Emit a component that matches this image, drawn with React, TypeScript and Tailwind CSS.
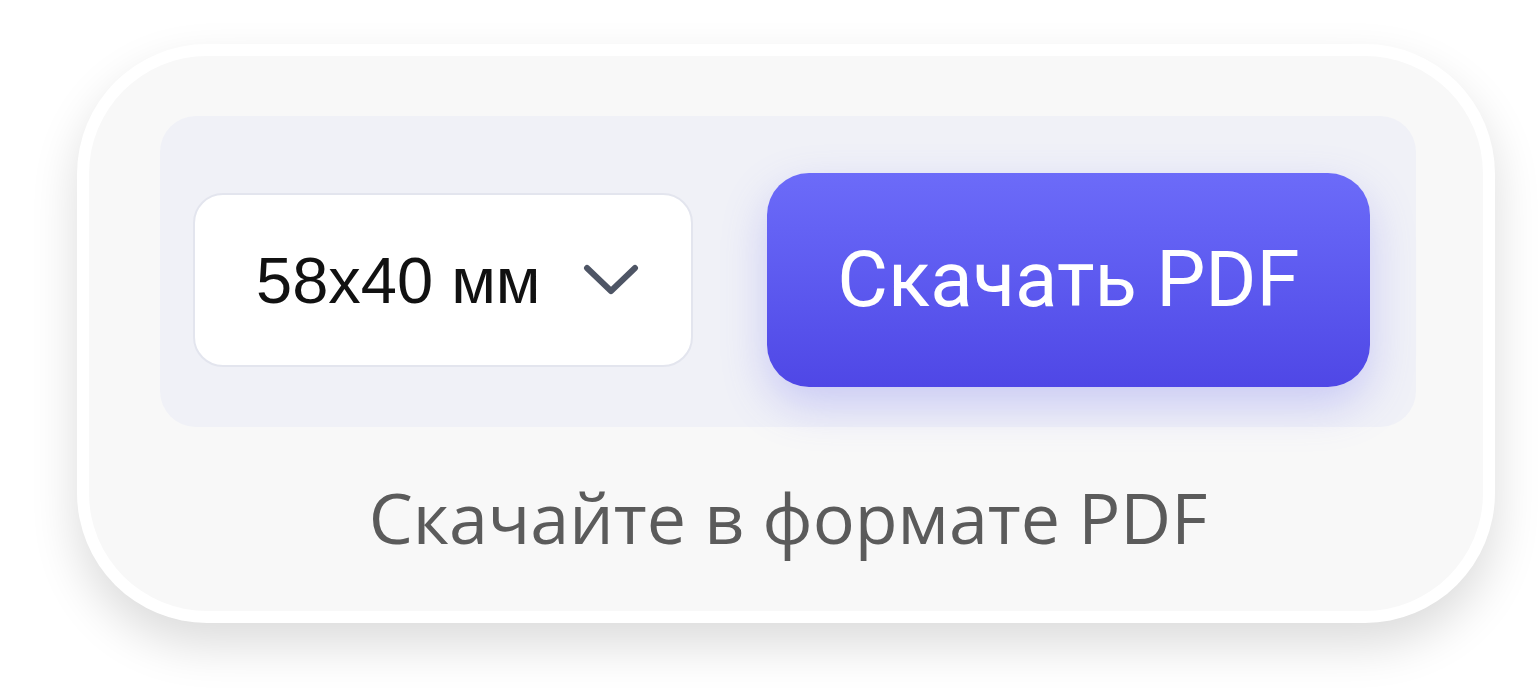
import React from 'react';

const Chevron = () => (
  <svg width="56" height="32" viewBox="0 0 56 32" fill="none" className="shrink-0">
    <path d="M4 4 L28 27 L52 4" stroke="#4e5565" strokeWidth="6" strokeLinecap="round" strokeLinejoin="round" />
  </svg>
);

const SizeSelect = () => (
  <div className="flex h-[174px] w-[500px] shrink-0 items-center rounded-[30px] border-2 border-[#e3e5ee] bg-white pl-[61px] pr-[52px]">
    <span className="flex-1 font-['Liberation_Sans',Arial,sans-serif] text-[65px] leading-none text-[#111111]">
      58x40 мм
    </span>
    <Chevron />
  </div>
);

const DownloadButton = () => (
  <button className="flex h-[214px] w-[603px] shrink-0 items-center justify-center rounded-[42px] bg-gradient-to-b from-[#6c6bf9] to-[#4f47e6] font-['Roboto',sans-serif] text-[78px] font-normal leading-none text-white shadow-[0_18px_45px_rgba(99,102,241,0.28)]">
    Скачать PDF
  </button>
);

export default function App() {
  return (
    <div className="min-h-[700px] bg-white pl-[77px] pt-[44px]">
      <div className="h-[579px] w-[1418px] rounded-[130px] bg-white p-[12px] shadow-[0_22px_48px_rgba(0,0,0,0.14)]">
        <div className="flex h-full flex-col rounded-[118px] bg-[#f8f8f8] pl-[71px] pr-[67px] pt-[60px]">
          <div className="flex h-[311px] items-center gap-[74px] rounded-[36px] bg-[#f0f1f7] pl-[33px] pr-[46px] pt-[17px]">
            <SizeSelect />
            <DownloadButton />
          </div>
          <div className="flex flex-1 items-center justify-center pb-[4px]">
            <p className="font-['Open_Sans',sans-serif] text-[70px] leading-none text-[#5b5b5b]">
              Скачайте в формате PDF
            </p>
          </div>
        </div>
      </div>
    </div>
  );
}
